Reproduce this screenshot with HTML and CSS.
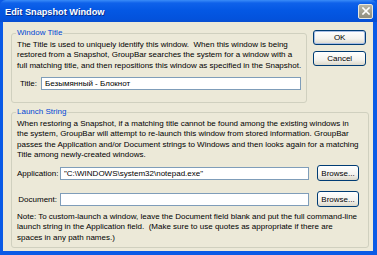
FILE: index.html
```html
<!DOCTYPE html>
<html>

<head>
    <meta charset="utf-8">
    <title>Edit Snapshot Window</title>
    <link rel="stylesheet" href="styles.css">
</head>

<body>
    <div class="window">
        <div class="titlebar">
            <span class="title">Edit Snapshot Window</span>
            <span class="close">
                <svg width="8" height="8" viewBox="0 0 8 8">
                    <path d="M1 1 L7 7 M7 1 L1 7" stroke="#fff" stroke-width="1.6" stroke-linecap="square"/>
                </svg>
            </span>
        </div>
        <div class="client">
            <div class="top">
                <fieldset class="group group-title">
                    <legend>Window Title</legend>
                    <p class="text">The Title is used to uniquely identify this window.&nbsp; When this window is being<br>restored from a Snapshot, GroupBar searches the system for a window with a<br>full matching title, and then repositions this window as specified in the Snapshot.</p>
                    <div class="title-row">
                        <label>Title:</label>
                        <input class="textbox title-box" value="Безымянный - Блокнот">
                    </div>
                </fieldset>
                <div class="actions">
                    <button class="button default">OK</button>
                    <button class="button">Cancel</button>
                </div>
            </div>
            <fieldset class="group group-launch">
                <legend>Launch String</legend>
                <p class="text">When restoring a Snapshot, if a matching title cannot be found among the existing windows in<br>the system, GroupBar will attempt to re-launch this window from stored information. GroupBar<br>passes the Application and/or Document strings to Windows and then looks again for a matching<br>Title among newly-created windows.</p>
                <div class="fields">
                    <label>Application:</label>
                    <input class="textbox" value="&quot;C:\WINDOWS\system32\notepad.exe&quot;">
                    <button class="button browse">Browse...</button>
                    <label>Document:</label>
                    <input class="textbox" value="">
                    <button class="button browse">Browse...</button>
                </div>
                <p class="text note">Note: To custom-launch a window, leave the Document field blank and put the full command-line<br>launch string in the Application field.&nbsp; (Make sure to use quotes as appropriate if there are<br>spaces in any path names.)</p>
            </fieldset>
        </div>
    </div>
</body>

</html>
```

FILE: styles.css
```css
html, body {
    margin: 0;
    padding: 0;
    font-family: "Liberation Sans", Arial, sans-serif;
    font-size: 8px;
}

.window {
    box-sizing: border-box;
    width: 377px;
    height: 255px;
    display: flex;
    flex-direction: column;
    background: #0a5ae6;
    padding: 0 4px 4px 3px;
}

.titlebar {
    height: 22px;
    margin: 0 -4px 0 -3px;
    padding: 0 4px 0 5px;
    display: flex;
    align-items: center;
    justify-content: space-between;
    background: linear-gradient(#3a8cf8 0, #0f62ea 3px, #0458e4 10px, #0352dc 19px, #0a4fd0 22px);
    border-radius: 6px 6px 0 0;
}

.title {
    color: #fff;
    font-weight: bold;
    font-size: 9.2px;
    text-shadow: 1px 1px 0 #0a2f8c;
    margin-top: 1px;
}

.close {
    box-sizing: border-box;
    width: 15px;
    height: 15px;
    display: flex;
    align-items: center;
    justify-content: center;
    border: 1px solid #e8e8e0;
    border-radius: 2px;
    background: linear-gradient(#b7b5a6, #8f8d7e);
}

.close svg {
    display: block;
}

.client {
    flex: 1;
    background: #ece9d8;
    padding: 6px 5px 0 8px;
}

.top {
    display: flex;
    gap: 6px;
}

.group {
    margin: 0;
    padding: 0 5px;
    border: 1px solid #d0d0bf;
    border-radius: 3px;
}

.group legend {
    color: #0046d5;
    padding: 0 1px;
    margin-left: -1px;
    line-height: 10px;
}

.group-title {
    width: 296px;
    box-sizing: border-box;
    height: 75px;
}

.text {
    margin: 2px 0 0 0;
    line-height: 10.3px;
    white-space: nowrap;
    color: #000;
}

.title-row {
    display: flex;
    align-items: center;
    gap: 4px;
    margin: 6px 0 0 3px;
}

.textbox {
    box-sizing: border-box;
    height: 13px;
    border: 1px solid #7f9db9;
    background: #fff;
    font: 8px "Liberation Sans", Arial, sans-serif;
    padding: 0 3px;
    margin: 0;
    outline: none;
}

.title-box {
    width: 260px;
}

.actions {
    display: flex;
    flex-direction: column;
    gap: 6px;
    padding-top: 2px;
}

.button {
    box-sizing: border-box;
    width: 53px;
    height: 15px;
    border: 1px solid #003c74;
    border-radius: 3px;
    background: linear-gradient(#ffffff, #f4f3ee 60%, #dcd8ca);
    font: 8px "Liberation Sans", Arial, sans-serif;
    color: #000;
    padding: 0;
    margin: 0;
}

.button.default {
    box-shadow: inset 0 0 0 1px #a9bfe6;
}

.group-launch {
    box-sizing: border-box;
    width: 358px;
    height: 141px;
    margin-top: 4px;
}

.fields {
    display: grid;
    grid-template-columns: 40px 249px 42px;
    column-gap: 3px;
    row-gap: 10px;
    align-items: center;
    margin-top: 5px;
}

.fields label {
    text-align: right;
}

.fields .textbox {
    width: 249px;
}

.fields .browse {
    width: 42px;
    height: 16px;
    margin-left: 5px;
}

.note {
    margin-top: 5px;
}
```
